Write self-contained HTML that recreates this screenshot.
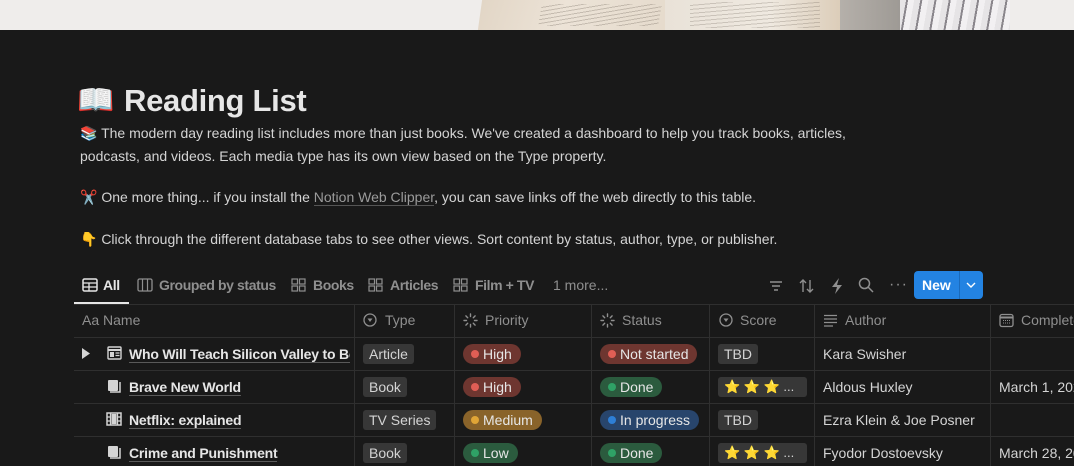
<!DOCTYPE html>
<html><head><meta charset="utf-8"><style>
*{box-sizing:border-box;margin:0;padding:0}
body{width:1074px;height:466px;overflow:hidden;background:#191919;font-family:"Liberation Sans","Noto Sans CJK JP",sans-serif;color:#d4d4d4;position:relative}
.cover{position:absolute;left:0;top:0;width:1074px;height:30px;background:#efedeb;overflow:hidden}
.abs{position:absolute}
.t{position:absolute;white-space:nowrap}
.title{left:124px;top:83px;font-size:31px;font-weight:bold;color:#e6e6e6;letter-spacing:-0.3px}
.p{left:80px;font-size:14px;color:#d4d4d4}
.tab{position:absolute;top:277px;font-size:14px;font-weight:bold;color:#8f8f8f;white-space:nowrap;letter-spacing:-0.4px}
.hl{position:absolute;height:1px;background:#2f2f2f}
.vl{position:absolute;width:1px;background:#2f2f2f;top:304px;height:162px}
.h{position:absolute;top:312px;font-size:14px;color:#8f8f8f;white-space:nowrap}
.name{position:absolute;font-size:14px;font-weight:bold;color:#e6e6e6;white-space:nowrap;border-bottom:1px solid #5a5a5a;line-height:16px;letter-spacing:-0.2px}
.tag{position:absolute;height:20px;line-height:20px;font-size:14px;padding:0 6px;border-radius:3px;background:#373737;color:#d4d4d4;white-space:nowrap}
.pill{position:absolute;height:20px;line-height:20px;font-size:14px;padding:0 9px 0 20px;border-radius:10px;white-space:nowrap;color:#e6e6e6}
.pill:before{content:"";position:absolute;left:8px;top:6px;width:8px;height:8px;border-radius:50%;background:var(--d)}
.red{background:#6e3630;--d:#e05e55}
.grn{background:#2b5b3e;--d:#2fa266}
.yel{background:#89632a;--d:#e0a536}
.blu{background:#28456c;--d:#2e7fd6}
.cell{position:absolute;font-size:14px;color:#d4d4d4;white-space:nowrap}
.ic{position:absolute}
</style></head><body>
<div class="cover">
  <div class="abs" style="left:480px;top:0;width:210px;height:30px;background:linear-gradient(100deg,#e2d6c6,#ece3d7 40%,#e4d9ca);transform:skewX(-8deg)"></div>
  <div class="abs" style="left:665px;top:0;width:175px;height:30px;background:linear-gradient(90deg,#e9e2d8,#efe9e0 60%,#dccdb9)"></div>
  <div class="abs" style="left:840px;top:0;width:60px;height:30px;background:linear-gradient(90deg,#b5b0aa,#9e9a95)"></div>
  <div class="abs" style="left:900px;top:0;width:110px;height:30px;background:repeating-linear-gradient(100deg,#e6e4e6 0 6px,#8a868c 6px 8px,#f2f0f2 8px 14px)"></div>
  <div class="abs" style="left:540px;top:4px;width:120px;height:22px;background:repeating-linear-gradient(170deg,transparent 0 3px,rgba(80,70,60,.25) 3px 4px);transform:skewX(-10deg)"></div>
  <div class="abs" style="left:690px;top:2px;width:130px;height:26px;background:repeating-linear-gradient(175deg,transparent 0 3px,rgba(80,70,60,.22) 3px 4px)"></div>
</div>
<div class="t" style="left:77px;top:85px;font-size:30px;line-height:32px">📖</div>
<div class="t title">Reading List</div>
<div class="t p" style="top:125px">📚 The modern day reading list includes more than just books. We've created a dashboard to help you track books, articles,</div>
<div class="t p" style="top:148px">podcasts, and videos. Each media type has its own view based on the Type property.</div>
<div class="t p" style="top:189px">✂️ One more thing... if you install the <span style="color:#9b9b9b;border-bottom:1px solid #555">Notion Web Clipper</span>, you can save links off the web directly to this table.</div>
<div class="t p" style="top:231px">👇 Click through the different database tabs to see other views. Sort content by status, author, type, or publisher.</div>

<svg class="ic" style="left:82px;top:278px" width="16" height="14" viewBox="0 0 16 14"><rect x="1" y="1" width="14" height="12" rx="1.5" fill="none" stroke="#e6e6e6" stroke-width="1.5"/><path d="M1 5h14M1 9h14M7 5v8" stroke="#e6e6e6" stroke-width="1.3"/></svg>
<div class="tab" style="left:103px;color:#e6e6e6">All</div>
<div class="abs" style="left:74px;top:302px;width:55px;height:2px;background:#e6e6e6"></div>
<svg class="ic" style="left:137px;top:278px" width="16" height="14" viewBox="0 0 16 14"><rect x="1" y="1" width="14" height="12" rx="1.5" fill="none" stroke="#8f8f8f" stroke-width="1.3"/><path d="M5.5 1v12M10.5 1v12" stroke="#8f8f8f" stroke-width="1.2"/></svg>
<div class="tab" style="left:159px">Grouped by status</div>
<svg class="ic" style="left:291px;top:278px" width="15" height="14" viewBox="0 0 15 14"><g fill="none" stroke="#8f8f8f" stroke-width="1.2"><rect x="1" y="1" width="5.5" height="5" /><rect x="8.5" y="1" width="5.5" height="5"/><rect x="1" y="8" width="5.5" height="5"/><rect x="8.5" y="8" width="5.5" height="5"/></g></svg>
<div class="tab" style="left:313px">Books</div>
<svg class="ic" style="left:368px;top:278px" width="15" height="14" viewBox="0 0 15 14"><g fill="none" stroke="#8f8f8f" stroke-width="1.2"><rect x="1" y="1" width="5.5" height="5" /><rect x="8.5" y="1" width="5.5" height="5"/><rect x="1" y="8" width="5.5" height="5"/><rect x="8.5" y="8" width="5.5" height="5"/></g></svg>
<div class="tab" style="left:390px">Articles</div>
<svg class="ic" style="left:453px;top:278px" width="15" height="14" viewBox="0 0 15 14"><g fill="none" stroke="#8f8f8f" stroke-width="1.2"><rect x="1" y="1" width="5.5" height="5" /><rect x="8.5" y="1" width="5.5" height="5"/><rect x="1" y="8" width="5.5" height="5"/><rect x="8.5" y="8" width="5.5" height="5"/></g></svg>
<div class="tab" style="left:475px">Film + TV</div>
<div class="tab" style="left:553px;font-weight:normal;letter-spacing:0">1 more...</div>

<svg class="ic" style="left:768px;top:278px" width="16" height="16" viewBox="0 0 16 16" stroke="#8f8f8f" stroke-width="1.5"><path d="M2 4h12M4 8h8M6 12h4"/></svg>
<svg class="ic" style="left:798px;top:277px" width="18" height="18" viewBox="0 0 18 18" fill="none" stroke="#8f8f8f" stroke-width="1.4"><path d="M5 15V3M2 6l3-3 3 3M12 3v12M9 12l3 3 3-3"/></svg>
<svg class="ic" style="left:830px;top:277px" width="14" height="18" viewBox="0 0 14 18"><path d="M9 1L2 10h5l-2 7 7-9H7z" fill="#8f8f8f"/></svg>
<svg class="ic" style="left:858px;top:277px" width="16" height="16" viewBox="0 0 16 16" fill="none" stroke="#8f8f8f" stroke-width="1.5"><circle cx="6.5" cy="6.5" r="5"/><path d="M10 10l5 5"/></svg>
<div class="t" style="left:889px;top:276px;font-size:16px;color:#8f8f8f;letter-spacing:1px">···</div>
<div class="abs" style="left:914px;top:271px;width:69px;height:28px;border-radius:4px;background:#2383e2"></div>
<div class="t" style="left:922px;top:277px;font-size:14px;font-weight:bold;color:#fff">New</div>
<div class="abs" style="left:959px;top:271px;width:1px;height:28px;background:#1a6bbd"></div>
<svg class="ic" style="left:965px;top:281px" width="12" height="8" viewBox="0 0 12 8"><path d="M2 2l4 4 4-4" fill="none" stroke="#fff" stroke-width="1.4"/></svg>

<div class="hl" style="left:74px;top:304px;width:1000px"></div>
<div class="hl" style="left:74px;top:337px;width:1000px"></div>
<div class="hl" style="left:74px;top:370px;width:1000px"></div>
<div class="hl" style="left:74px;top:403px;width:1000px"></div>
<div class="hl" style="left:74px;top:436px;width:1000px"></div>
<div class="vl" style="left:354px"></div>
<div class="vl" style="left:454px"></div>
<div class="vl" style="left:591px"></div>
<div class="vl" style="left:709px"></div>
<div class="vl" style="left:814px"></div>
<div class="vl" style="left:990px"></div>

<div class="h" style="left:82px">Aa Name</div>
<svg class="ic" style="left:363px;top:313px" width="14" height="14" viewBox="0 0 14 14"><circle cx="7" cy="7" r="6" fill="none" stroke="#8f8f8f" stroke-width="1.3"/><path d="M4.5 5.5h5L7 9z" fill="#8f8f8f"/></svg>
<div class="h" style="left:385px">Type</div>
<svg class="ic" style="left:463px;top:313px" width="15" height="15" viewBox="0 0 15 15" stroke="#8f8f8f" stroke-width="1.4" stroke-linecap="round"><path d="M7.5 1v2.5M7.5 11.5V14M1 7.5h2.5M11.5 7.5H14M2.9 2.9l1.8 1.8M10.3 10.3l1.8 1.8M2.9 12.1l1.8-1.8M10.3 4.7l1.8-1.8"/></svg>
<div class="h" style="left:485px">Priority</div>
<svg class="ic" style="left:600px;top:313px" width="15" height="15" viewBox="0 0 15 15" stroke="#8f8f8f" stroke-width="1.4" stroke-linecap="round"><path d="M7.5 1v2.5M7.5 11.5V14M1 7.5h2.5M11.5 7.5H14M2.9 2.9l1.8 1.8M10.3 10.3l1.8 1.8M2.9 12.1l1.8-1.8M10.3 4.7l1.8-1.8"/></svg>
<div class="h" style="left:622px">Status</div>
<svg class="ic" style="left:719px;top:313px" width="14" height="14" viewBox="0 0 14 14"><circle cx="7" cy="7" r="6" fill="none" stroke="#8f8f8f" stroke-width="1.3"/><path d="M4.5 5.5h5L7 9z" fill="#8f8f8f"/></svg>
<div class="h" style="left:740px">Score</div>
<svg class="ic" style="left:823px;top:314px" width="15" height="13" viewBox="0 0 15 13" stroke="#8f8f8f" stroke-width="1.3"><path d="M1 1.5h13M1 5h13M1 8.5h13M1 12h9"/></svg>
<div class="h" style="left:845px">Author</div>
<svg class="ic" style="left:999px;top:313px" width="15" height="15" viewBox="0 0 15 15"><rect x="1" y="1.5" width="13" height="12" rx="2" fill="none" stroke="#8f8f8f" stroke-width="1.3"/><path d="M1 4.5h13" stroke="#8f8f8f" stroke-width="2"/><path d="M4 7.5h7M4 10h7" stroke="#8f8f8f" stroke-width="1" stroke-dasharray="1 1"/></svg>
<div class="h" style="left:1021px">Completed</div>

<!-- row 1 -->
<svg class="ic" style="left:81px;top:348px" width="10" height="11" viewBox="0 0 10 11"><path d="M1 0l8 5.5L1 11z" fill="#d4d4d4"/></svg>
<svg class="ic" style="left:107px;top:346px" width="15" height="14" viewBox="0 0 15 14"><rect x="1" y="1" width="13" height="12" rx="1" fill="none" stroke="#d4d4d4" stroke-width="1.4"/><path d="M1 4h13" stroke="#d4d4d4" stroke-width="2"/><rect x="3" y="6" width="4" height="5" fill="#d4d4d4"/><path d="M8.5 7h4M8.5 9.5h4" stroke="#d4d4d4" stroke-width="1.2"/></svg>
<div class="name" style="left:129px;top:346px;width:221px;overflow:hidden">Who Will Teach Silicon Valley to Be Ethical?</div>
<div class="tag" style="left:363px;top:344px">Article</div>
<div class="pill red" style="left:463px;top:344px">High</div>
<div class="pill red" style="left:600px;top:344px">Not started</div>
<div class="tag" style="left:718px;top:344px">TBD</div>
<div class="cell" style="left:823px;top:346px">Kara Swisher</div>
<!-- row 2 -->
<svg class="ic" style="left:107px;top:379px" width="15" height="15" viewBox="0 0 15 15"><rect x="1" y="1" width="10" height="11" rx="1" fill="#d4d4d4"/><path d="M13 3v10H3" fill="none" stroke="#d4d4d4" stroke-width="1.5"/></svg>
<div class="name" style="left:129px;top:379px">Brave New World</div>
<div class="tag" style="left:363px;top:377px">Book</div>
<div class="pill red" style="left:463px;top:377px">High</div>
<div class="pill grn" style="left:600px;top:377px">Done</div>
<div class="tag" style="left:718px;top:377px;width:89px;font-size:13px">⭐ ⭐ ⭐ ...</div>
<div class="cell" style="left:823px;top:379px">Aldous Huxley</div>
<div class="cell" style="left:999px;top:379px">March 1, 2022</div>
<!-- row 3 -->
<svg class="ic" style="left:106px;top:412px" width="16" height="14" viewBox="0 0 16 14"><rect x="1" y="1" width="14" height="12" fill="none" stroke="#d4d4d4" stroke-width="1.5"/><path d="M4.5 1v12M11.5 1v12M1 5h3.5M1 9h3.5M11.5 5H15M11.5 9H15" stroke="#d4d4d4" stroke-width="1.3"/><rect x="5.5" y="2" width="5" height="10" fill="#d4d4d4"/></svg>
<div class="name" style="left:129px;top:412px">Netflix: explained</div>
<div class="tag" style="left:363px;top:410px">TV Series</div>
<div class="pill yel" style="left:463px;top:410px">Medium</div>
<div class="pill blu" style="left:600px;top:410px">In progress</div>
<div class="tag" style="left:718px;top:410px">TBD</div>
<div class="cell" style="left:823px;top:412px">Ezra Klein &amp; Joe Posner</div>
<!-- row 4 -->
<svg class="ic" style="left:107px;top:445px" width="15" height="15" viewBox="0 0 15 15"><rect x="1" y="1" width="10" height="11" rx="1" fill="#d4d4d4"/><path d="M13 3v10H3" fill="none" stroke="#d4d4d4" stroke-width="1.5"/></svg>
<div class="name" style="left:129px;top:445px">Crime and Punishment</div>
<div class="tag" style="left:363px;top:443px">Book</div>
<div class="pill grn" style="left:463px;top:443px">Low</div>
<div class="pill grn" style="left:600px;top:443px">Done</div>
<div class="tag" style="left:718px;top:443px;width:89px;font-size:13px">⭐ ⭐ ⭐ ...</div>
<div class="cell" style="left:823px;top:445px">Fyodor Dostoevsky</div>
<div class="cell" style="left:999px;top:445px">March 28, 2022</div>
</body></html>
